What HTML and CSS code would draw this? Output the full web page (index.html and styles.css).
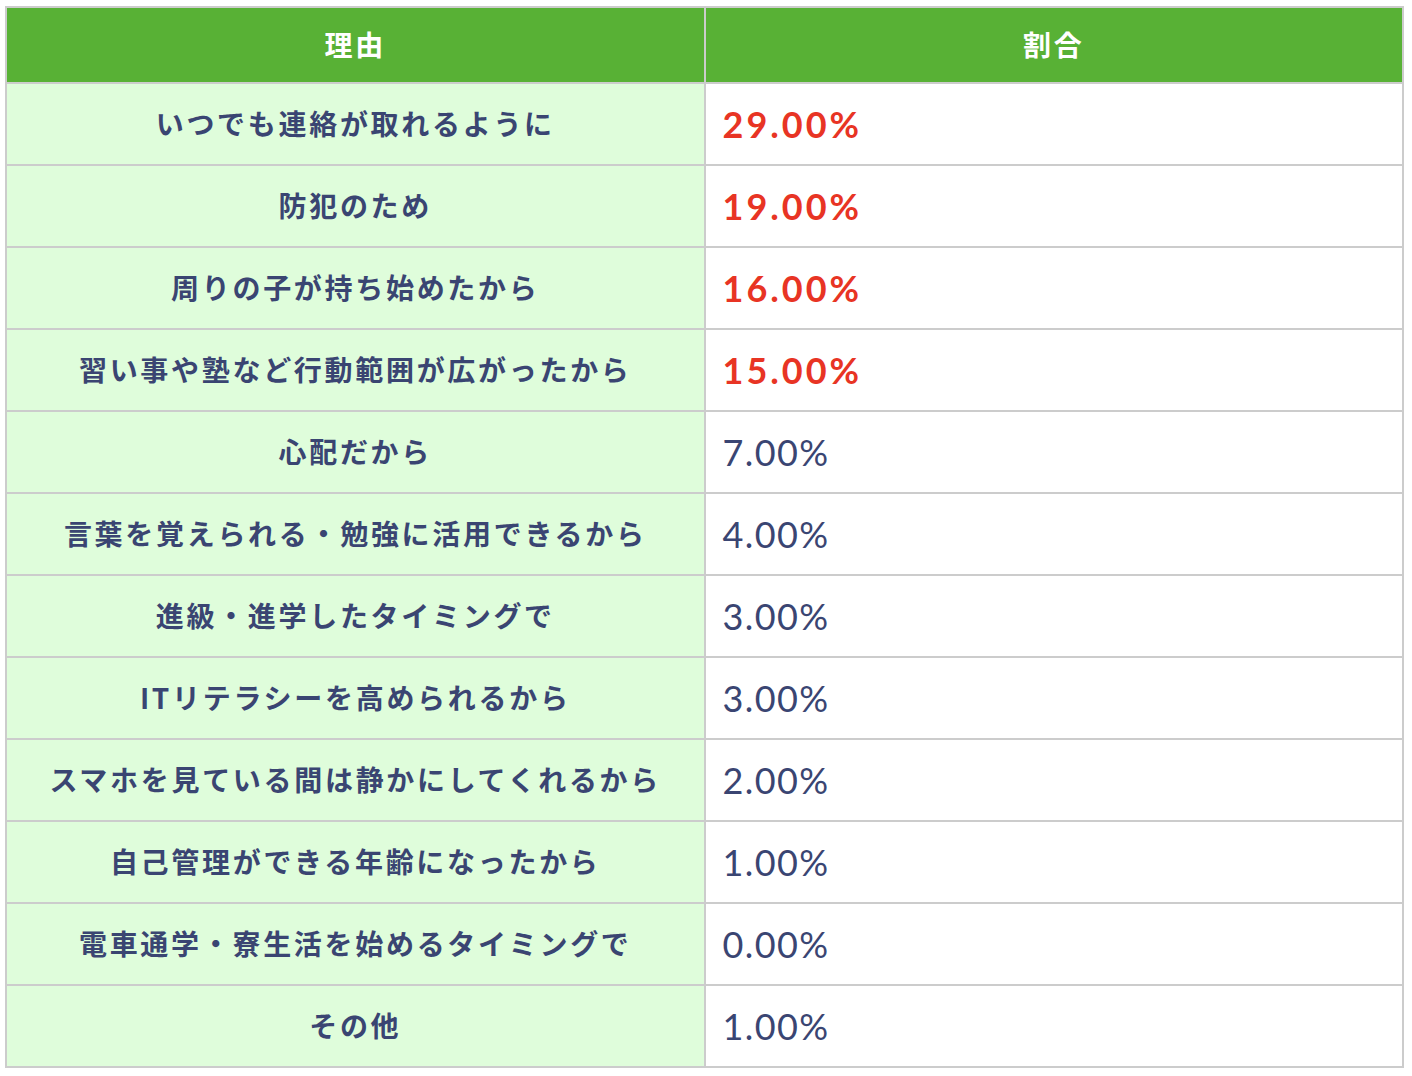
FILE: index.html
```html
<!DOCTYPE html>
<html lang="ja">
<head>
<meta charset="utf-8">
<link rel="stylesheet" href="styles.css">
</head>
<body>
<div class="wrap">
<table class="tbl">
  <thead>
    <tr><th>理由</th><th>割合</th></tr>
  </thead>
  <tbody>
    <tr><td class="reason">いつでも連絡が取れるように</td><td class="pct hi">29.00%</td></tr>
    <tr><td class="reason">防犯のため</td><td class="pct hi">19.00%</td></tr>
    <tr><td class="reason">周りの子が持ち始めたから</td><td class="pct hi">16.00%</td></tr>
    <tr><td class="reason">習い事や塾など行動範囲が広がったから</td><td class="pct hi">15.00%</td></tr>
    <tr><td class="reason">心配だから</td><td class="pct">7.00%</td></tr>
    <tr><td class="reason">言葉を覚えられる・勉強に活用できるから</td><td class="pct">4.00%</td></tr>
    <tr><td class="reason">進級・進学したタイミングで</td><td class="pct">3.00%</td></tr>
    <tr><td class="reason">ITリテラシーを高められるから</td><td class="pct">3.00%</td></tr>
    <tr><td class="reason">スマホを見ている間は静かにしてくれるから</td><td class="pct">2.00%</td></tr>
    <tr><td class="reason">自己管理ができる年齢になったから</td><td class="pct">1.00%</td></tr>
    <tr><td class="reason">電車通学・寮生活を始めるタイミングで</td><td class="pct">0.00%</td></tr>
    <tr><td class="reason">その他</td><td class="pct">1.00%</td></tr>
  </tbody>
</table>
</div>
</body>
</html>
```
FILE: styles.css
```css
html, body {
  margin: 0;
  padding: 0;
  background: #ffffff;
}
.wrap {
  padding: 6px 8px 0 5px;
}
.tbl {
  width: 1399px;
  border-collapse: collapse;
  table-layout: fixed;
  font-family: "Noto Sans CJK JP", "Noto Sans", sans-serif;
}
.tbl th, .tbl td {
  border: 2px solid #cccccc;
  padding: 0;
}
.tbl th {
  background: #58b135;
  color: #ffffff;
  font-size: 28px;
  font-weight: 700;
  letter-spacing: 2.7px;
  height: 72px;
  padding-bottom: 2px;
  text-align: center;
  width: 50%;
}
.tbl td {
  height: 78px;
  padding-bottom: 2px;
}
.reason {
  background: #dffddb;
  color: #3a4572;
  font-size: 28px;
  font-weight: 700;
  letter-spacing: 2.7px;
  text-align: center;
}
.tbl td.pct {
  background: #ffffff;
  color: #3a4572;
  font-family: "Lato", "Noto Sans", sans-serif;
  font-size: 36px;
  font-weight: 400;
  letter-spacing: 1.4px;
  padding-left: 17px;
  padding-bottom: 0;
  height: 80px;
  text-align: left;
}
.tbl td.pct.hi {
  color: #e83424;
  font-weight: 700;
  letter-spacing: 3px;
}
```
